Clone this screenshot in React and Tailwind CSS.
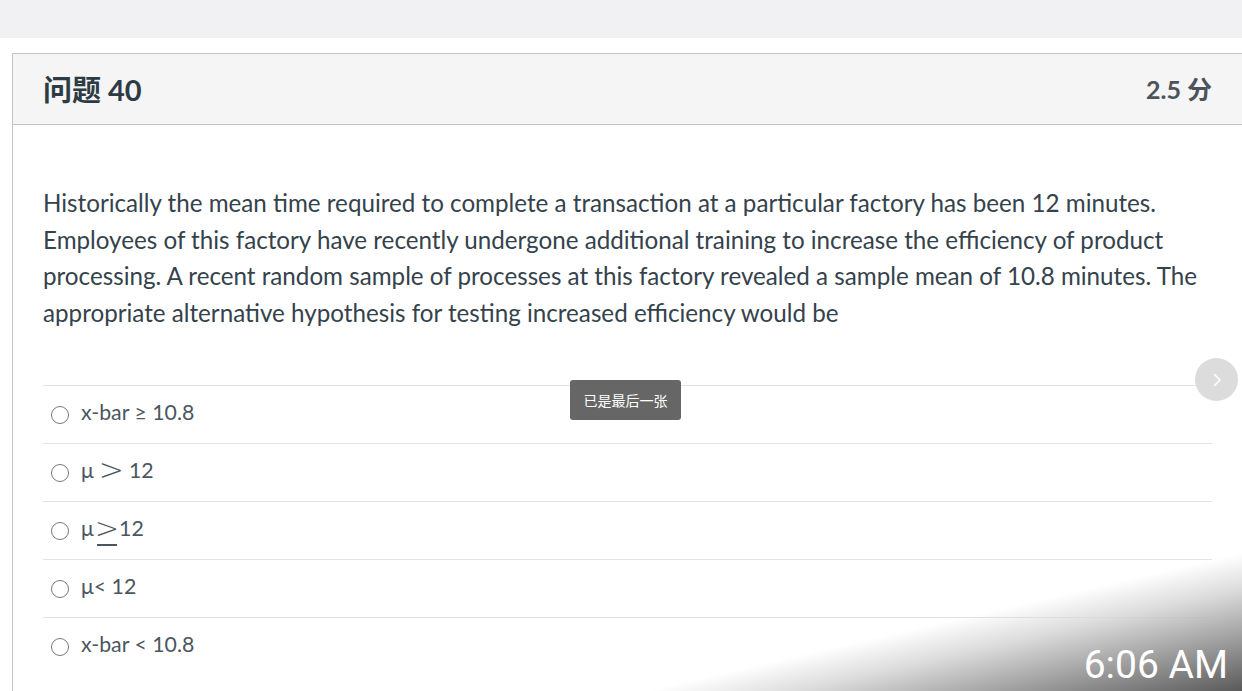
import React from "react";

const font = { fontFamily: 'Lato, "Noto Sans CJK SC", sans-serif' };

function Radio() {
  return <span className="inline-block w-[18px] h-[18px] rounded-full border-[1.5px] border-[#7a7a7a] bg-white shrink-0" />;
}

function Row({ children }) {
  return (
    <div className="h-[58px] border-t border-[#e3e3e3] flex items-center pl-[8px] gap-[12px] text-[21.3px] text-[#4a5660]">
      <Radio />
      <div className="flex items-center -mt-[3px]">{children}</div>
    </div>
  );
}

export default function App() {
  return (
    <div className="relative w-[1242px] h-[691px] overflow-hidden bg-white flex flex-col" style={font}>
      <div className="h-[38px] shrink-0 bg-[#f1f1f4]" />
      <div className="pl-[12px] pt-[15px] flex-1 flex flex-col">
        <div className="border-l border-t border-[#c4c4c4] flex-1">
          <div className="h-[71px] bg-[#f5f5f5] border-b border-[#c4c4c4] flex items-center justify-between pl-[30px] pr-[30px]">
            <div className="text-[29px] font-bold text-[#2d3b45] leading-none" style={font}>问题 40</div>
            <div className="text-[25px] font-bold text-[#4d5459] leading-none" style={font}>2.5 分</div>
          </div>
          <div className="pl-[30px] pr-[30px] pt-[60px]">
            <p className="text-[24.2px] leading-[36.5px] text-[#34424c]">
              Historically the mean time required to complete a transaction at a particular factory has been 12 minutes. Employees of this factory have recently undergone additional training to increase the efficiency of product processing. A recent random sample of processes at this factory revealed a sample mean of 10.8 minutes. The appropriate alternative hypothesis for testing increased efficiency would be
            </p>
            <div className="mt-[54px]">
              <Row>x-bar ≥ 10.8</Row>
              <Row>
                <span>μ</span>
                <span className="text-[30px] leading-none mx-[5px] -mt-[2px]" style={{ fontFamily: '"DejaVu Sans", sans-serif', fontWeight: 200 }}>&gt;</span>
                <span>12</span>
              </Row>
              <Row>
                <span>μ</span>
                <span className="relative text-[29px] leading-none ml-[1px] -mt-[2px]" style={{ fontFamily: '"DejaVu Sans", sans-serif', fontWeight: 200 }}>
                  &gt;
                  <span className="absolute left-[2px] right-[2px] bottom-[-3px] h-[2px] bg-[#4a5660]" />
                </span>
                <span>12</span>
              </Row>
              <Row>μ&lt; 12</Row>
              <Row>x-bar &lt; 10.8</Row>
            </div>
          </div>
        </div>
      </div>

      <div className="absolute left-[570px] top-[380px] w-[111px] h-[40px] rounded-[3px] bg-[#666666] flex items-center justify-center text-[14px] text-white" style={{ fontFamily: '"Noto Sans CJK SC", sans-serif' }}>
        已是最后一张
      </div>

      <div className="absolute left-[1195px] top-[358px] w-[43px] h-[43px] rounded-full bg-[#dcdcdc] flex items-center justify-center">
        <svg width="14" height="18" viewBox="0 0 14 18" fill="none">
          <path d="M4 3 L10 9 L4 15" stroke="white" strokeWidth="1.5" />
        </svg>
      </div>

      <div className="absolute right-0 bottom-0 w-[640px] h-[140px] bg-[linear-gradient(167deg,rgba(255,255,255,0)_52%,rgba(215,215,215,0.85)_64%,rgba(90,90,90,1)_100%)]" />
      <div className="absolute right-[14px] bottom-[6px] text-[39px] leading-none text-white" style={{ fontFamily: 'Roboto, sans-serif' }}>
        6:06 AM
      </div>
    </div>
  );
}
